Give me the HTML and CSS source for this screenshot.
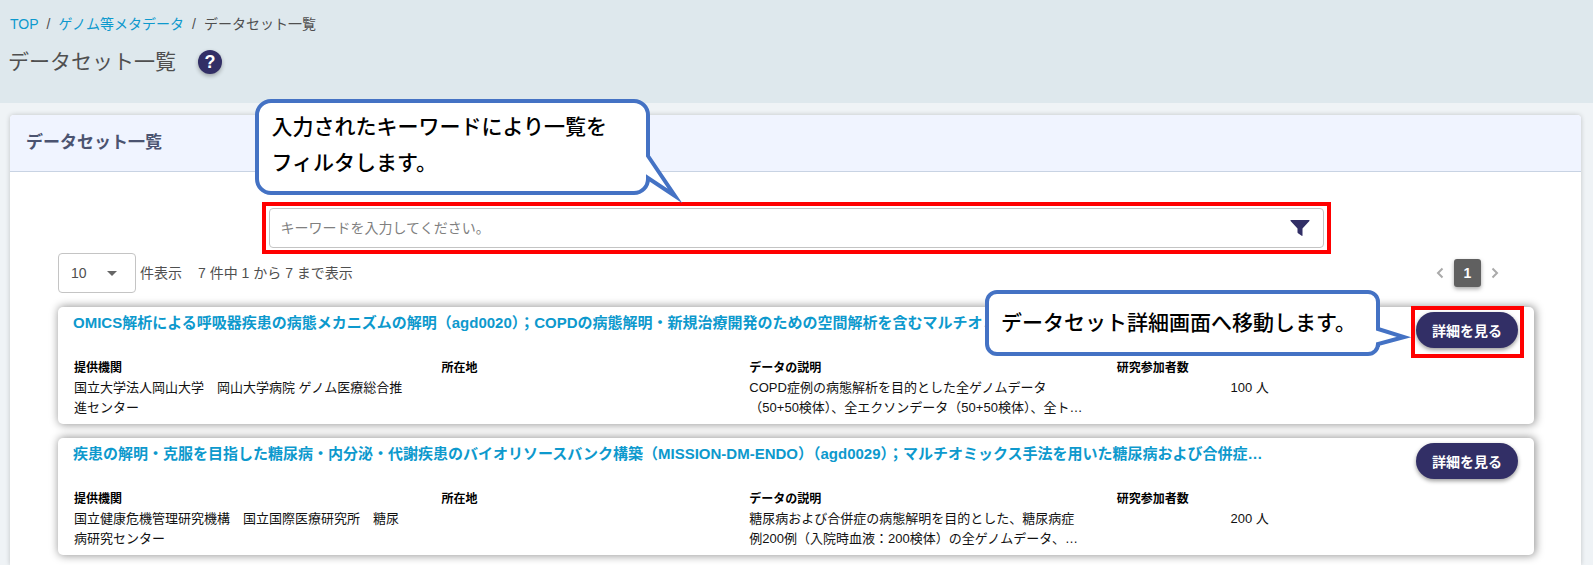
FILE: index.html
```html
<!DOCTYPE html>
<html lang="ja">
<head>
  <meta charset="UTF-8">
  <title>データセット一覧</title>
  <link rel="stylesheet" href="styles.css">
</head>
<body>

  <!-- Page header -->
  <header class="page-header">
    <nav class="breadcrumb">
      <a href="/">TOP</a>
      <span>/</span>
      <a href="/metadata/">ゲノム等メタデータ</a>
      <span>/</span>
      <span>データセット一覧</span>
    </nav>
    <div class="page-title">
      <h1>データセット一覧</h1>
      <button type="button" class="help">?</button>
    </div>
  </header>

  <main class="panel">
    <h2 class="panel-title">データセット一覧</h2>

    <div class="panel-body">
      <!-- Keyword filter -->
      <form class="search marked">
        <input type="text" id="keyword" aria-label="キーワード" placeholder="キーワードを入力してください。">
        <button type="submit" class="filter" aria-label="フィルタ">
          <svg width="20" height="18" viewBox="0 0 20 18"><path d="M1 1h18q1 0 .4 .9L12.5 9.500V16.300q0 .9-.8 .4L8 14.200q-.5-.4-.5-1V9.500L.6 1.900Q0 1 1 1z" fill="#322f66"/></svg>
        </button>
        <div class="callout callout-filter">
          入力されたキーワードにより一覧を<br>フィルタします。
          <svg class="tail" width="40" height="56" viewBox="0 0 40 56">
            <path d="M0 0H2V3L29 43L2 25V28H0z" fill="#fff"/>
            <path d="M2 0V3L29 43L2 25V28" fill="none" stroke="#4472c4" stroke-width="4" stroke-miterlimit="10"/>
          </svg>
        </div>
      </form>

      <div class="toolbar">
        <div class="per-page">
          <div class="select">
            <select id="per-page">
              <option>10</option>
              <option>20</option>
              <option>50</option>
            </select>
          </div>
          <label for="per-page">件表示</label>
          <span class="count">7 件中 1 から 7 まで表示</span>
        </div>
        <nav class="pagination">
          <a href="#prev" aria-label="前へ"><svg width="8" height="12" viewBox="0 0 8 12"><path d="M6.500 1.500L2 6l4.500 4.500"/></svg></a>
          <a href="#1" class="current">1</a>
          <a href="#next" aria-label="次へ"><svg width="8" height="12" viewBox="0 0 8 12"><path d="M1.500 1.500L6 6l-4.500 4.500"/></svg></a>
        </nav>
      </div>

      <!-- Datasets -->
      <article class="dataset">
        <div class="dataset-head">
          <a href="/dataset/agd0020/" class="name">OMICS解析による呼吸器疾患の病態メカニズムの解明（agd0020）；COPDの病態解明・新規治療開発のための空間解析を含むマルチオミ</a>
          <div class="action marked">
            <button type="button" class="detail">詳細を見る</button>
            <div class="callout callout-detail">
              データセット詳細画面へ移動します。
              <svg class="tail" width="40" height="24" viewBox="0 0 40 24">
                <path d="M0 1H2V4L28 12L2 19V22H0z" fill="#fff"/>
                <path d="M2 1V4L28 12L2 19V22" fill="none" stroke="#4472c4" stroke-width="4"/>
              </svg>
            </div>
          </div>
        </div>
        <dl class="fields">
          <div><dt>提供機関</dt><dd>国立大学法人岡山大学　岡山大学病院 ゲノム医療総合推進センター</dd></div>
          <div><dt>所在地</dt><dd></dd></div>
          <div><dt>データの説明</dt><dd>COPD症例の病態解析を目的とした全ゲノムデータ（50+50検体）、全エクソンデータ（50+50検体）、全ト…</dd></div>
          <div><dt>研究参加者数</dt><dd class="number">100 人</dd></div>
        </dl>
      </article>

      <article class="dataset">
        <div class="dataset-head">
          <a href="/dataset/agd0029/" class="name">疾患の解明・克服を目指した糖尿病・内分泌・代謝疾患のバイオリソースバンク構築（MISSION-DM-ENDO）（agd0029）；マルチオミックス手法を用いた糖尿病および合併症…</a>
          <div class="action">
            <button type="button" class="detail">詳細を見る</button>
          </div>
        </div>
        <dl class="fields">
          <div><dt>提供機関</dt><dd>国立健康危機管理研究機構　国立国際医療研究所　糖尿病研究センター</dd></div>
          <div><dt>所在地</dt><dd></dd></div>
          <div><dt>データの説明</dt><dd>糖尿病および合併症の病態解明を目的とした、糖尿病症例200例（入院時血液：200検体）の全ゲノムデータ、…</dd></div>
          <div><dt>研究参加者数</dt><dd class="number">200 人</dd></div>
        </dl>
      </article>
    </div>
  </main>

</body>
</html>
```

FILE: styles.css
```css
* {
  box-sizing: border-box;
}

body {
  display: flex;
  flex-direction: column;
  min-height: 100vh;
  margin: 0;
  background: #eff3f6;
  color: #4f4f4f;
  font-family: "Liberation Sans", "Noto Sans CJK JP", sans-serif;
  font-size: 14px;
  line-height: 20px;
}

a {
  color: #0d99cd;
  text-decoration: none;
}

button,
input,
select {
  font-family: inherit;
  font-size: 14px;
}

button {
  border: none;
  padding: 0;
  cursor: pointer;
}

/* Page header */
.page-header {
  background: #dee8ed;
  padding: 14px 8px 25px;
}

.breadcrumb {
  display: flex;
  gap: 8px;
  padding-left: 2px;
}

.page-title {
  display: flex;
  align-items: center;
  gap: 22px;
  margin-top: 12px;
}

h1 {
  margin: 0;
  font-size: 21px;
  line-height: 32px;
  font-weight: normal;
}

.help {
  width: 24px;
  height: 24px;
  border-radius: 50%;
  background: #322f66;
  color: #fff;
  font-size: 18px;
  font-weight: bold;
  line-height: 24px;
  box-shadow: 0 2px 4px rgba(0, 0, 0, 0.3);
}

/* Panel */
.panel {
  flex: 1;
  margin: 12px 12px 0 10px;
  background: #fff;
  border-radius: 4px 4px 0 0;
  box-shadow: 0 0 5px rgba(0, 0, 0, 0.2);
}

.panel-title {
  margin: 0;
  padding: 16px;
  background: #f0f4ff;
  border-bottom: 1px solid #c8d3e3;
  border-radius: 4px 4px 0 0;
  color: #4b5370;
  font-size: 17px;
  line-height: 24px;
}

.panel-body {
  padding: 36px 47px 8px 48px;
}

/* Red frame round the part that a callout explains */
.marked {
  position: relative;
}

.marked::after {
  content: "";
  position: absolute;
  inset: -6px -6px -10px -5px;
  border: 4px solid #f00;
  pointer-events: none;
}

/* Keyword filter */
.search {
  display: flex;
  align-items: center;
  width: 1055px;
  max-width: 100%;
  height: 40px;
  margin: 0 auto;
  border: 1px solid #c4c4c4;
  border-radius: 4px;
}

.search.marked::after {
  inset: -7px -8px;
}

.search input {
  flex: 1;
  border: none;
  outline: none;
  padding: 0 11px;
  background: none;
}

.search input::placeholder {
  color: #808080;
}

.filter {
  display: flex;
  margin-right: 13px;
  background: none;
}

/* Toolbar */
.toolbar {
  display: flex;
  justify-content: space-between;
  align-items: center;
  margin: 5px 0 14px;
}

.per-page {
  display: flex;
  align-items: center;
  gap: 4px;
}

.select {
  position: relative;
}

.select select {
  appearance: none;
  display: block;
  width: 78px;
  height: 40px;
  padding: 0 12px;
  border: 1px solid #c4c4c4;
  border-radius: 4px;
  background: #fff;
  color: #4f4f4f;
}

.select::after {
  content: "";
  position: absolute;
  top: 18px;
  right: 19px;
  border: 5px solid transparent;
  border-top-color: #666;
  border-bottom: none;
  pointer-events: none;
}

.count {
  margin-left: 12px;
}

.pagination {
  display: flex;
  align-items: center;
  gap: 10px;
  margin-right: 35px;
}

.pagination svg {
  display: block;
  fill: none;
  stroke: #aaa;
  stroke-width: 2;
}

.pagination .current {
  width: 27px;
  height: 28px;
  border-radius: 3px;
  background: #606060;
  color: #fff;
  font-weight: bold;
  line-height: 28px;
  text-align: center;
  box-shadow: 0 2px 4px rgba(0, 0, 0, 0.35);
}

/* Datasets */
.dataset {
  padding: 5px 8px 6px;
  margin-bottom: 14px;
  border-radius: 5px;
  box-shadow: 1px 0 8px 1px rgba(0, 0, 0, 0.4);
}

.dataset:last-child {
  margin-bottom: 0;
}

.dataset-head {
  display: flex;
  justify-content: space-between;
  padding: 0 8px 10px 7px;
}

.name {
  flex: 1;
  min-width: 0;
  overflow: hidden;
  white-space: nowrap;
  font-size: 15px;
  font-weight: bold;
  line-height: 22px;
}

.detail {
  display: block;
  width: 102px;
  height: 36px;
  border-radius: 18px;
  background: #322f66;
  color: #fff;
  font-weight: bold;
  box-shadow: 0 2px 4px rgba(0, 0, 0, 0.4);
}

.fields {
  display: grid;
  grid-template-columns: 37fr 31fr 37fr 42fr;
  margin: 0;
  color: #111;
}

.fields > div {
  padding-left: 8px;
}

dt {
  color: #000;
  font-size: 12px;
  font-weight: bold;
}

dd {
  width: 94%;
  min-height: 40px;
  margin: 0;
  font-size: 13px;
}

.fields .number {
  width: 152px;
  text-align: right;
}

/* Callouts */
.callout {
  position: absolute;
  z-index: 1;
  width: 395px;
  border: 4px solid #4472c4;
  border-radius: 16px;
  background: #fff;
  color: #000;
  font-size: 21px;
  font-weight: 500;
  line-height: 36px;
}

.callout-filter {
  left: -15px;
  bottom: 52px;
  padding: 6px 13px 10px;
}

.callout-detail {
  top: -22px;
  right: 138px;
  padding: 11px 12px;
  border-radius: 12px;
}

.tail {
  position: absolute;
  left: 100%;
}

.callout-filter .tail {
  top: 50px;
}

.callout-detail .tail {
  top: 31px;
}
```
